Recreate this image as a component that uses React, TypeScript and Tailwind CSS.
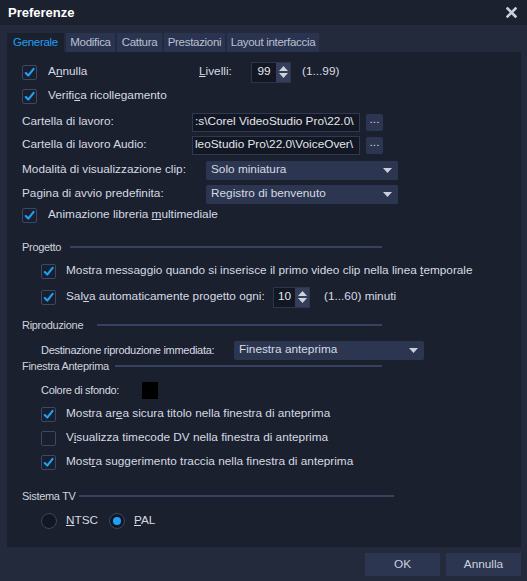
import React from 'react'

function Check({ checked = true }: { checked?: boolean }) {
  return (
    <span className="flex h-[15px] w-[15px] shrink-0 items-center justify-center rounded-[2px] border border-[#3b4766] bg-[#1a1f2d]">
      {checked && (
        <svg width="11" height="11" viewBox="0 0 11 11">
          <path d="M1.8 6 L4.3 8.6 L9.6 1.8" fill="none" stroke="#1ea2f7" strokeWidth="2.1" strokeLinecap="round" strokeLinejoin="round" />
        </svg>
      )}
    </span>
  )
}

function Radio({ checked = false }: { checked?: boolean }) {
  return (
    <span className="flex h-[16px] w-[16px] shrink-0 items-center justify-center rounded-full border border-[#3a4561] bg-[#131723]">
      {checked && <span className="h-[8px] w-[8px] rounded-full bg-[#1ea2f7]" />}
    </span>
  )
}

function Spin({ value, w }: { value: string; w: string }) {
  return (
    <div className={`flex h-[21px] ${w} border border-[#2c354b] bg-[#131723]`}>
      <span className="flex flex-1 items-center justify-center text-[#e2e6ee]">{value}</span>
      <span className="flex w-[14px] flex-col items-center justify-center gap-[2px] bg-[#343e58]">
        <svg width="9" height="5" viewBox="0 0 9 5"><path d="M0 5 L4.5 0 L9 5 Z" fill="#cdd3df" /></svg>
        <svg width="9" height="5" viewBox="0 0 9 5"><path d="M0 0 L9 0 L4.5 5 Z" fill="#cdd3df" /></svg>
      </span>
    </div>
  )
}

function Select({ text, w }: { text: string; w: string }) {
  return (
    <div className={`flex h-[19px] ${w} items-center justify-between rounded-[2px] bg-[#2c3651] pl-[5px] pr-[6px] text-[#d6dae3]`}>
      <span>{text}</span>
      <svg width="9" height="5" viewBox="0 0 9 5"><path d="M0 0 L9 0 L4.5 5 Z" fill="#c9cfdc" /></svg>
    </div>
  )
}

function Section({ label, lw, line }: { label: string; lw: string; line: string }) {
  return (
    <div className="flex h-[20px] items-center text-[11px] tracking-[-0.3px] text-[#cfd3dc]">
      <span className={lw}>{label}</span>
      <span className={`h-[2px] ${line} bg-[#374260]`} />
    </div>
  )
}

// the field only shows the tail of the folder path
function PathInput({ path }: { path: string }) {
  return (
    <div className="flex items-center gap-[6px]">
      <div className="flex h-[19px] w-[168px] items-center whitespace-nowrap border border-[#2f3950] bg-[#131723] pl-[2px] text-[#e2e6ee]">
        {path}
      </div>
      <span className="flex h-[17px] w-[17px] items-center justify-center rounded-[2px] bg-[#2c3651] pb-[4px] text-[#d6dae3]">...</span>
    </div>
  )
}

export default function App() {
  const tabs = ['Generale', 'Modifica', 'Cattura', 'Prestazioni', 'Layout interfaccia']
  const tabW = ['w-[57px]', 'w-[49px]', 'w-[45px]', 'w-[61px]', 'w-[92px]']

  return (
    <div className="flex h-[581px] w-[527px] flex-col bg-[#222a3c] font-['Liberation_Sans',Arial,sans-serif] text-[11.8px] text-[#d6dae3]">
      <div className="flex h-[25px] items-center justify-between bg-[#1c2130] pl-[8px] pr-[10px]">
        <span className="text-[13px] font-bold text-white">Preferenze</span>
        <svg width="11" height="11" viewBox="0 0 11 11">
          <path d="M1.5 1.5 L9.5 9.5 M9.5 1.5 L1.5 9.5" stroke="#c9d0df" strokeWidth="2.6" strokeLinecap="square" />
        </svg>
      </div>

      <div className="flex flex-1 flex-col pl-[7px] pr-[6px]">
        <div className="mt-[8px] flex h-[19px] gap-[2px] text-[11.5px] tracking-[-0.3px]">
          {tabs.map((t, i) => (
            <div
              key={t}
              className={`${tabW[i]} flex items-center justify-center ${i === 0 ? 'bg-[#1b202e] text-[#1e9ff2]' : 'bg-[#2a3450] text-[#b9c0cd]'}`}
            >
              {t}
            </div>
          ))}
        </div>

        <div className="flex h-[495px] flex-col bg-[#1b202e] pl-[15px] pt-[9px]">
          <div className="flex h-[22px] items-center">
            <div className="flex w-[177px] items-center gap-[11px]">
              <Check />
              <span>A<u>n</u>nulla</span>
            </div>
            <span className="w-[52px]"><u>L</u>ivelli:</span>
            <Spin value="99" w="w-[40px]" />
            <span className="ml-[11px]">(1...99)</span>
          </div>

          <div className="mt-[3px] flex h-[20px] items-center gap-[11px]">
            <Check />
            <span>Verifi<u>c</u>a ricollegamento</span>
          </div>

          <div className="mt-[6px] flex h-[20px] items-center">
            <span className="w-[170px]">Cartella di lavoro:</span>
            <PathInput path=":s\Corel VideoStudio Pro\22.0\" />
          </div>

          <div className="mt-[3px] flex h-[20px] items-center">
            <span className="w-[170px]">Cartella di lavoro Audio:</span>
            <PathInput path="leoStudio Pro\22.0\VoiceOver\" />
          </div>

          <div className="mt-[5px] flex h-[20px] items-center">
            <span className="w-[184px]">Modalità di visualizzazione clip:</span>
            <Select text="Solo miniatura" w="w-[192px]" />
          </div>

          <div className="mt-[4px] flex h-[20px] items-center">
            <span className="w-[184px]">Pagina di avvio predefinita:</span>
            <Select text="Registro di benvenuto" w="w-[192px]" />
          </div>

          <div className="mt-[1px] flex h-[20px] items-center gap-[11px]">
            <Check />
            <span>Animazione libreria <u>m</u>ultimediale</span>
          </div>

          <div className="mt-[12px]">
            <Section label="Progetto" lw="w-[48px]" line="w-[312px]" />
          </div>

          <div className="ml-[19px] mt-[4px] flex h-[20px] items-center gap-[10px]">
            <Check />
            <span>Mostra messaggio quando si inserisce il primo video clip nella linea <u>t</u>emporale</span>
          </div>

          <div className="ml-[19px] mt-[5px] flex h-[22px] items-center">
            <Check />
            <span className="ml-[10px] w-[207px]">Sal<u>v</u>a automaticamente progetto ogni:</span>
            <Spin value="10" w="w-[37px]" />
            <span className="ml-[14px]">(1...60) minuti</span>
          </div>

          <div className="mt-[7px]">
            <Section label="Riproduzione" lw="w-[75px]" line="w-[285px]" />
          </div>

          <div className="ml-[19px] mt-[6px] flex h-[18px] items-center">
            <span className="w-[193px] text-[11px] tracking-[-0.3px]">Destinazione riproduzione immediata:</span>
            <Select text="Finestra anteprima" w="w-[190px]" />
          </div>

          <div className="-mb-[3px] -mt-[3px]">
            <Section label="Finestra Anteprima" lw="w-[93px]" line="w-[267px]" />
          </div>

          <div className="ml-[19px] mt-[7px] flex h-[20px] items-center">
            <span className="w-[101px] text-[11px] tracking-[-0.3px]">Colore di sfondo:</span>
            <span className="h-[17px] w-[16px] bg-black" />
          </div>

          <div className="ml-[19px] mt-[4px] flex h-[20px] items-center gap-[10px]">
            <Check />
            <span>Mostra ar<u>e</u>a sicura titolo nella finestra di anteprima</span>
          </div>

          <div className="ml-[19px] mt-[4px] flex h-[20px] items-center gap-[10px]">
            <Check checked={false} />
            <span>V<u>i</u>sualizza timecode DV nella finestra di anteprima</span>
          </div>

          <div className="ml-[19px] mt-[4px] flex h-[20px] items-center gap-[10px]">
            <Check />
            <span>Most<u>r</u>a suggerimento traccia nella finestra di anteprima</span>
          </div>

          <div className="mt-[14px]">
            <Section label="Sistema TV" lw="w-[57px]" line="w-[315px]" />
          </div>

          <div className="ml-[19px] mt-[5px] flex h-[20px] items-center">
            <Radio />
            <span className="ml-[9px] w-[43px]"><u>N</u>TSC</span>
            <Radio checked />
            <span className="ml-[9px]"><u>P</u>AL</span>
          </div>
        </div>

        <div className="mt-[6px] flex justify-end gap-[6px]">
          <button className="h-[23px] w-[75px] bg-[#2c3651] text-[#cdd2dd]">OK</button>
          <button className="h-[23px] w-[75px] bg-[#2c3651] text-[#cdd2dd]">Annulla</button>
        </div>
      </div>
    </div>
  )
}
